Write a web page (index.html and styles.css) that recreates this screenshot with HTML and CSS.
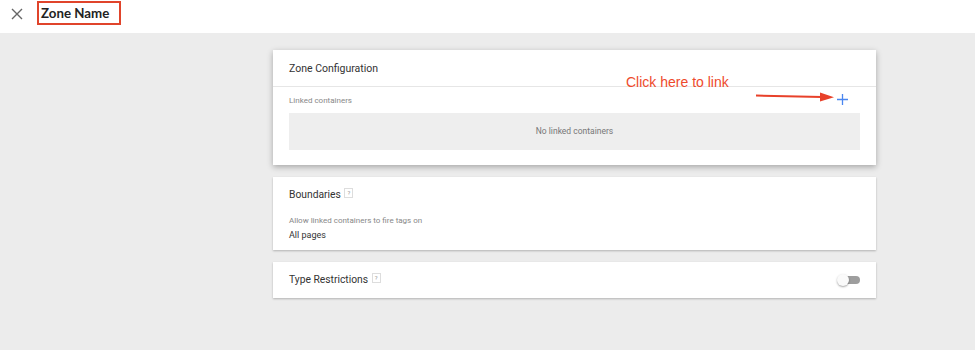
FILE: index.html
```html
<!DOCTYPE html>
<html lang="en">
<head>
    <meta charset="UTF-8">
    <title>Zone Name</title>
    <link rel="stylesheet" href="styles.css">
</head>
<body>
    <div class="topbar">
        <span class="close-btn">
            <svg width="12" height="12" viewBox="0 0 12 12"><path d="M1 1L11 11M11 1L1 11" stroke="#666" stroke-width="1.4"/></svg>
        </span>
        <span class="zone-title">Zone Name</span>
    </div>

    <div class="content">
        <div class="card config">
            <div class="card-head">Zone Configuration</div>
            <div class="card-body">
                <div class="linked-row">
                    <span class="label">Linked containers</span>
                    <span class="add-btn">
                        <svg width="11" height="11" viewBox="0 0 11 11"><path d="M5.5 0V11M0 5.5H11" stroke="#4a86f0" stroke-width="1.3"/></svg>
                    </span>
                </div>
                <div class="empty-box">No linked containers</div>
            </div>
            <span class="note">Click here to link</span>
            <svg class="note-arrow" width="80" height="10" viewBox="0 0 80 10">
                <path d="M0 3.5L66 5" stroke="#e8412a" stroke-width="2"/>
                <path d="M64 0.5L78 5.3L64 9.5Z" fill="#e8412a"/>
            </svg>
        </div>

        <div class="card">
            <div class="card-head plain">Boundaries <span class="help">?</span></div>
            <div class="card-body tight">
                <div class="label">Allow linked containers to fire tags on</div>
                <div class="value">All pages</div>
            </div>
        </div>

        <div class="card">
            <div class="card-head plain row">
                <span>Type Restrictions <span class="help">?</span></span>
                <span class="toggle"><span class="knob"></span></span>
            </div>
        </div>
    </div>
</body>
</html>
```

FILE: styles.css
```css
body {
    margin: 0;
    background: #ececec;
    font-family: Roboto, "Liberation Sans", Arial, sans-serif;
    color: #333;
    height: 100vh;
}
.topbar {
    height: 33px;
    background: white;
    display: flex;
    align-items: center;
    padding-left: 11px;
    box-sizing: border-box;
}
.close-btn {
    display: flex;
    width: 12px;
    height: 12px;
    margin-right: 14px;
    margin-top: -6px;
}
.zone-title {
    font-family: Lato, "Liberation Sans", sans-serif;
    font-weight: 700;
    font-size: 13.3px;
    color: #222;
    border: 2px solid #e0442b;
    padding: 2px 10px 2px 2px;
    margin-top: -8px;
    line-height: 16px;
}
.content {
    display: flex;
    flex-direction: column;
    gap: 12px;
    width: 603px;
    margin-left: 273px;
    padding-top: 17px;
}
.card {
    background: white;
    box-shadow: 0 1px 2px rgba(0, 0, 0, 0.25);
    position: relative;
}
.card.config {
    box-shadow: 0 2px 6px rgba(0, 0, 0, 0.3);
}
.card-head {
    height: 36px;
    line-height: 37px;
    padding: 0 16px;
    font-size: 10.5px;
    border-bottom: 1px solid #e6e6e6;
}
.card-head.plain {
    border-bottom: none;
    font-size: 10.3px;
    height: 36px;
    line-height: 36px;
}
.card-head.row {
    display: flex;
    justify-content: space-between;
    align-items: center;
}
.card-body {
    padding: 0 16px 15px;
}
.card-body.tight {
    padding: 3px 16px 10px;
}
.linked-row {
    display: flex;
    justify-content: space-between;
    align-items: center;
    height: 26px;
}
.label {
    font-size: 8px;
    color: #888;
}
.add-btn {
    display: flex;
    margin-right: 12px;
    margin-top: -1px;
}
.empty-box {
    background: #eeeeee;
    height: 37px;
    line-height: 37px;
    text-align: center;
    font-size: 8.5px;
    color: #777;
}
.value {
    font-size: 9px;
    color: #333;
    margin-top: 5px;
}
.help {
    display: inline-block;
    width: 7px;
    height: 8px;
    border: 1px solid #ddd;
    font-size: 6px;
    line-height: 8px;
    text-align: center;
    color: #999;
    vertical-align: middle;
    margin-left: 1px;
    position: relative;
    top: -2px;
}
.toggle {
    width: 19px;
    height: 8px;
    background: #9e9e9e;
    border-radius: 4px;
    position: relative;
    margin-right: 0;
}
.knob {
    position: absolute;
    left: -4px;
    top: -2px;
    width: 12px;
    height: 12px;
    border-radius: 50%;
    background: #fafafa;
    box-shadow: 0 1px 2px rgba(0, 0, 0, 0.35);
}
.note {
    position: absolute;
    left: 353px;
    top: 24px;
    font-family: "Liberation Sans", Arial, sans-serif;
    font-size: 14px;
    color: #ee4a2c;
}
.note-arrow {
    position: absolute;
    left: 483px;
    top: 42px;
}
```
